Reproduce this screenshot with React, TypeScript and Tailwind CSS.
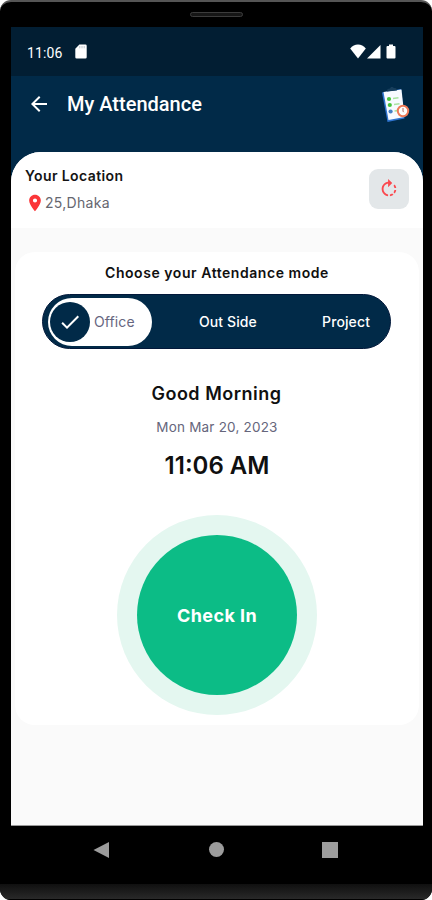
import React, { useState } from 'react';
import { MdArrowBack, MdCheck, MdLocationOn, MdRotateRight } from 'react-icons/md';

const modes = ['Office', 'Out Side', 'Project'];

function StatusBar() {
    return (
        <div className="flex h-[49px] shrink-0 items-center justify-between bg-[#021e33] pl-4 pr-[27px] font-[Roboto,sans-serif] text-white">
            <div className="flex items-center gap-[13px]">
                <span className="w-[35px] pt-0.5 text-[14px] leading-none tracking-[0.1px]">11:06</span>
                <svg width="12" height="15" viewBox="0 0 12 15">
                    <path d="M4.4.5h6A1.3 1.3 0 0 1 11.700 1.800v11.400a1.300 1.300 0 0 1-1.300 1.300H1.600A1.300 1.300 0 0 1 .3 13.200V4.700z" fill="#fff" />
                    <path d="M4.800 2v2.300M7 2v2.300M9.200 2v2.300" stroke="#b9c0c6" strokeWidth="0.9" />
                </svg>
            </div>
            <div className="flex items-center">
                <svg width="16" height="15" viewBox="0 0 16 15">
                    <path d="M8 14.500.2 4.500C2.200 2 5 .5 8 .5s5.800 1.500 7.800 4z" fill="#fff" />
                </svg>
                <svg className="ml-px" width="14" height="15" viewBox="0 0 14 15">
                    <path d="M13.500 1v13.500H0z" fill="#fff" />
                </svg>
                <svg className="ml-[5px]" width="10" height="15" viewBox="0 0 10 15">
                    <path d="M3 .5h4V2h1.500a1 1 0 0 1 1 1v10.500a1 1 0 0 1-1 1h-7a1 1 0 0 1-1-1V3a1 1 0 0 1 1-1H3z" fill="#fff" />
                </svg>
            </div>
        </div>
    );
}

function ClipboardIcon() {
    return (
        <svg width="32" height="38" viewBox="0 0 32 38">
            <path d="M3 6.500 22 3l3.500 29.500L8.500 36z" fill="#2f74d0" />
            <path d="M4.500 6 22.500 3.500 25.500 31 9.500 34z" fill="#f7faff" />
            <path d="m8 5.500.5-2.500 2.500-.5C11 .8 14.200.3 14.700 2l2.500.2.800 2.200z" fill="#173e5c" />
            <circle cx="10" cy="13" r="2.100" fill="#46c43c" />
            <circle cx="10.800" cy="19" r="2.100" fill="#46c43c" />
            <circle cx="11.600" cy="25.500" r="2.100" fill="#4380c6" />
            <path d="m14 12.500 5.500-.8M15 18.500l5.500-.8M15.500 25l3-.4" stroke="#a9e3a2" strokeWidth="1.600" />
            <circle cx="24" cy="25" r="5.200" fill="#fff" stroke="#f07a58" strokeWidth="2" />
            <path d="M24 22v3.200l.8 1" fill="none" stroke="#b5665b" strokeWidth="1" />
        </svg>
    );
}

function ModeSwitch() {
    const [active, setActive] = useState(0);

    return (
        <div className="mr-px mt-[11px] flex h-[55px] w-[349px] items-center rounded-full border border-[#02183a] bg-[#012a48] pl-[5px] pr-5">
            {modes.map((mode, index) => (
                <button
                    key={mode}
                    onClick={() => setActive(index)}
                    className={`text-[14px] tracking-[0.1px] last:ml-auto ${active === index
                        ? 'mr-[47px] flex h-[48px] w-[104px] items-center gap-1 rounded-full bg-white pl-[2px] text-[#666680]'
                        : 'font-medium text-white'}`}
                >
                    {active === index && (
                        <span className="flex size-[40px] shrink-0 items-center justify-center rounded-full bg-[#012a48] text-white">
                            <MdCheck size={24} />
                        </span>
                    )}
                    {mode}
                </button>
            ))}
        </div>
    );
}

export default function App() {
    return (
        <div className="h-[900px] w-[432px] bg-white">
            <div className="flex h-full flex-col overflow-hidden rounded-[11px] border-t-2 border-[#555] bg-black font-[Inter,sans-serif]">
                <div className="flex h-[24px] shrink-0 items-center justify-center">
                    <div className="h-[5px] w-[53px] rounded-full border border-[#3c3c3c] bg-[#161616]" />
                </div>

                <div className="ml-[11px] mt-px flex h-[799px] w-[412px] shrink-0 flex-col bg-[#012a48]">
                    <StatusBar />

                    <div className="flex h-[76px] shrink-0 items-start pl-4 pr-[12px] text-white">
                        <MdArrowBack size={24} className="mt-4" />
                        <h1 className="ml-4 mt-[15px] font-[Roboto,sans-serif] text-[20px] font-medium leading-[27px]">My Attendance</h1>
                        <div className="ml-auto mt-2.5">
                            <ClipboardIcon />
                        </div>
                    </div>

                    <div className="flex grow flex-col rounded-t-[30px] border-b border-[#999] bg-[#fafafa]">
                        <div className="flex h-[76px] items-start justify-between rounded-t-[30px] bg-white px-[14px]">
                            <div className="pt-[14px]">
                                <h2 className="text-[14px] font-semibold leading-5 tracking-[0.4px] text-[#141414]">Your Location</h2>
                                <div className="mt-[7px] flex items-center text-[14px] leading-5 tracking-[0.3px] text-[#66666f]">
                                    <MdLocationOn size={20} className="text-[#fb3538]" />
                                    25,Dhaka
                                </div>
                            </div>
                            <button className="mt-[17px] flex size-10 items-center justify-center rounded-[9px] bg-[#e3e7e9] text-[#fa4a50]">
                                <MdRotateRight size={22} />
                            </button>
                        </div>

                        <div className="mx-1 mt-6 flex h-[473px] flex-col items-center rounded-[20px] bg-white text-[#101010]">
                            <h2 className="mt-[11px] text-[14px] font-semibold leading-5 tracking-[0.55px]">Choose your Attendance mode</h2>
                            <ModeSwitch />
                            <p className="mr-px mt-[31px] text-[18px] font-semibold leading-7 tracking-[0.5px]">Good Morning</p>
                            <p className="mt-[9px] text-[13.500px] leading-5 tracking-[0.2px] text-[#66667c]">Mon Mar 20, 2023</p>
                            <p className="mt-[13px] text-[24px] font-semibold leading-8">11:06 AM</p>
                            <div className="mt-[33px] flex size-[200px] shrink-0 items-center justify-center rounded-full bg-[#e4f7f0]">
                                <button className="size-[160px] rounded-full bg-[#0cbc86] text-[18px] font-bold tracking-[0.4px] text-white">Check In</button>
                            </div>
                        </div>
                    </div>
                </div>

                <div className="flex h-[58px] shrink-0 items-start pl-[93px] pt-4">
                    <svg width="16" height="16" viewBox="0 0 16 16">
                        <path d="M16 0v16L.5 8z" fill="#9c9c9c" />
                    </svg>
                    <div className="ml-[100px] size-[15px] rounded-full bg-[#9c9c9c]" />
                    <div className="ml-[98px] size-4 bg-[#9c9c9c]" />
                </div>
                <div className="grow border-b border-black bg-linear-to-b from-[#101010] to-[#292929]" />
            </div>
        </div>
    );
}
